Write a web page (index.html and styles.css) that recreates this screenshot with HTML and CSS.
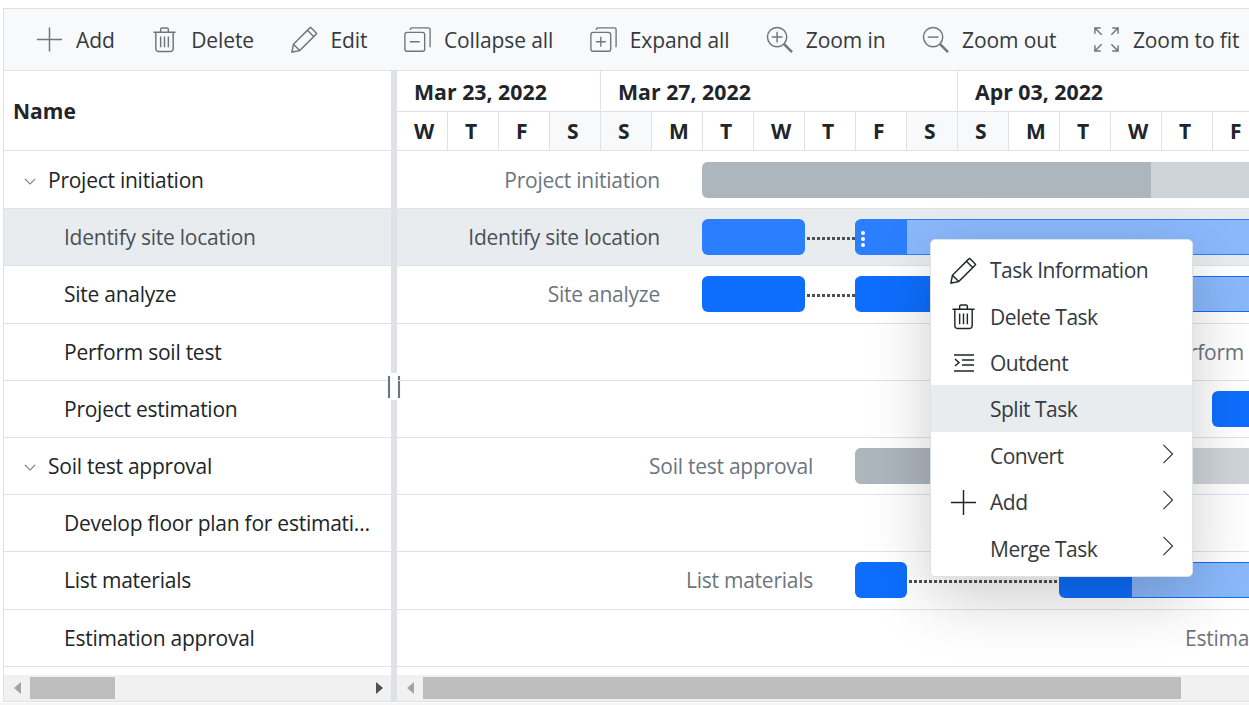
FILE: index.html
```html
<!DOCTYPE html>
<html lang="en">
<head>
<meta charset="utf-8">
<title>Gantt</title>
<link rel="stylesheet" href="styles.css">
</head>
<body>
<div class="gantt">
  <div class="toolbar">
    <div class="tool"><svg class="ti" viewBox="0 0 28 28"><path d="M1 14h26M14 1.500v25"/></svg><span>Add</span></div>
    <div class="tool"><svg class="ti" viewBox="0 0 28 28"><path d="M2.500 6.500h23M5 7v16.500a3 3 0 0 0 3 3h12a3 3 0 0 0 3-3V7M10 6V3.500a1.500 1.500 0 0 1 1.500-1.500h5a1.500 1.500 0 0 1 1.500 1.500V6M10 11v11M14 11v11M18 11v11"/></svg><span>Delete</span></div>
    <div class="tool"><svg class="ti" viewBox="0 0 28 28"><path d="M1 27l1.500-8L19 2.500l1.500-1 6 6-1 1.500L9 25.500zM2.500 19l6.500 6.500M17 4.500l6.500 6.500"/></svg><span>Edit</span></div>
    <div class="tool"><svg class="ti" viewBox="0 0 30 28"><rect x="1" y="6" width="22" height="21" rx="2.500"/><path d="M7 3.500V3a2 2 0 0 1 2-2h18a2 2 0 0 1 2 2v18a2 2 0 0 1-.5 1.500M6.500 16.500h11"/></svg><span>Collapse all</span></div>
    <div class="tool"><svg class="ti" viewBox="0 0 30 28"><rect x="1" y="6" width="22" height="21" rx="2.500"/><path d="M7 3.500V3a2 2 0 0 1 2-2h18a2 2 0 0 1 2 2v18a2 2 0 0 1-.5 1.500M6.500 16.500h11M12 11v11"/></svg><span>Expand all</span></div>
    <div class="tool"><svg class="ti" viewBox="0 0 28 28"><circle cx="11.500" cy="11.500" r="10"/><path d="M18.500 18.500L27 27" class="thick"/><path d="M6 11.500h11M11.500 6v11"/></svg><span>Zoom in</span></div>
    <div class="tool"><svg class="ti" viewBox="0 0 28 28"><circle cx="11.500" cy="11.500" r="10"/><path d="M18.500 18.500L27 27" class="thick"/><path d="M6 11.500h11"/></svg><span>Zoom out</span></div>
    <div class="tool"><svg class="ti" viewBox="0 0 28 28"><path d="M2 2l7 7M2 8V2h6M26 2l-7 7M20 2h6v6M2 26l7-7M2 20v6h6M26 26l-7-7M20 26h6v-6"/></svg><span>Zoom to fit</span></div>
  </div>
  <div class="main">
    <div class="pane-grid">
      <div class="name-head">Name</div>
      <div class="rows">
        <div class="row"><svg class="chev" viewBox="0 0 14 8"><path d="M1 1l6 6 6-6"/></svg><span>Project initiation</span></div>
        <div class="row child sel"><span>Identify site location</span></div>
        <div class="row child"><span>Site analyze</span></div>
        <div class="row child"><span>Perform soil test</span></div>
        <div class="row child"><span>Project estimation</span></div>
        <div class="row"><svg class="chev" viewBox="0 0 14 8"><path d="M1 1l6 6 6-6"/></svg><span>Soil test approval</span></div>
        <div class="row child"><span class="clip">Develop floor plan for estimation</span></div>
        <div class="row child"><span>List materials</span></div>
        <div class="row child"><span>Estimation approval</span></div>
        <div class="row child"></div>
      </div>
      <div class="hscroll">
        <i class="arr-l"></i>
        <div class="track"><div class="thumb thumb-a"></div></div>
        <i class="arr-r"></i>
      </div>
    </div>
    <div class="splitter"><div class="grip"><b></b><b></b></div></div>
    <div class="pane-chart">
      <div class="months">
        <div class="month m4">Mar 23, 2022</div>
        <div class="month m7">Mar 27, 2022</div>
        <div class="month m7">Apr 03, 2022</div>
      </div>
      <div class="days">
        <div class="day">W</div><div class="day">T</div><div class="day">F</div><div class="day off">S</div>
        <div class="day off">S</div><div class="day">M</div><div class="day">T</div><div class="day">W</div><div class="day">T</div><div class="day">F</div><div class="day off">S</div>
        <div class="day off">S</div><div class="day">M</div><div class="day">T</div><div class="day">W</div><div class="day">T</div><div class="day">F</div>
      </div>
      <div class="rows">
        <div class="row track-row">
          <span class="lbl" style="width:263px">Project initiation</span>
          <div class="bar sum" style="left:305px;width:600px"><div class="prog" style="width:449px"></div></div>
        </div>
        <div class="row track-row sel">
          <span class="lbl" style="width:263px">Identify site location</span>
          <div class="bar task hot" style="left:305px;width:103px"></div>
          <div class="link" style="left:410px;width:48px"></div>
          <div class="bar part hot" style="left:458px;width:600px"><div class="prog" style="width:52px"><span class="dots"></span></div></div>
        </div>
        <div class="row track-row">
          <span class="lbl" style="width:263px">Site analyze</span>
          <div class="bar task" style="left:305px;width:103px"></div>
          <div class="link" style="left:410px;width:48px"></div>
          <div class="bar part" style="left:458px;width:600px"><div class="prog" style="width:205px"></div></div>
        </div>
        <div class="row track-row"><span class="lbl-l" style="left:768px">Perform soil test</span></div>
        <div class="row track-row"><div class="bar task" style="left:815px;width:100px"></div></div>
        <div class="row track-row">
          <span class="lbl" style="width:416px">Soil test approval</span>
          <div class="bar sum" style="left:458px;width:600px"><div class="prog" style="width:200px"></div></div>
        </div>
        <div class="row track-row"></div>
        <div class="row track-row">
          <span class="lbl" style="width:416px">List materials</span>
          <div class="bar task" style="left:458px;width:52px"></div>
          <div class="link" style="left:512px;width:150px"></div>
          <div class="bar part" style="left:662px;width:600px"><div class="prog" style="width:73px"></div></div>
        </div>
        <div class="row track-row"><span class="lbl-l" style="left:788px">Estimation approval</span></div>
        <div class="row track-row"></div>
      </div>
      <div class="hscroll">
        <i class="arr-l"></i>
        <div class="track"><div class="thumb thumb-b"></div></div>
      </div>
    </div>
  </div>
  <div class="menu">
    <div class="mi"><svg class="mic" viewBox="0 0 28 28"><path d="M1 27l1.500-8L19 2.500l1.500-1 6 6-1 1.500L9 25.500zM2.500 19l6.500 6.500M17 4.500l6.500 6.500"/></svg><span>Task Information</span></div>
    <div class="mi"><svg class="mic" viewBox="0 0 28 28"><path d="M2.500 6.500h23M5 7v16.500a3 3 0 0 0 3 3h12a3 3 0 0 0 3-3V7M10 6V3.500a1.500 1.500 0 0 1 1.500-1.500h5a1.500 1.500 0 0 1 1.500 1.500V6M10 11v11M14 11v11M18 11v11"/></svg><span>Delete Task</span></div>
    <div class="mi"><svg class="mic mic-o" viewBox="0 0 22 18"><path d="M1 1h20M9 6h12M9 11h12M1 17h20M2 5l4 3.500L2 12"/></svg><span>Outdent</span></div>
    <div class="mi on"><span class="nic"></span><span>Split Task</span></div>
    <div class="mi"><span class="nic"></span><span>Convert</span><svg class="sub" viewBox="0 0 12 22"><path d="M1 1l10 10L1 21"/></svg></div>
    <div class="mi"><svg class="mic" viewBox="0 0 28 28"><path d="M1 14h26M14 1v26"/></svg><span>Add</span><svg class="sub" viewBox="0 0 12 22"><path d="M1 1l10 10L1 21"/></svg></div>
    <div class="mi"><span class="nic"></span><span>Merge Task</span><svg class="sub" viewBox="0 0 12 22"><path d="M1 1l10 10L1 21"/></svg></div>
  </div>
</div>
<div class="foot"></div>
</body>
</html>
```

FILE: styles.css
```css
html, body { margin: 0; padding: 0; }
body {
  height: 705px;
  overflow: hidden;
  background: #fff;
  color: #212529;
  font-family: "Open Sans", "Noto Sans", sans-serif;
  font-size: 21px;
  letter-spacing: -.25px;
}
.gantt {
  position: relative;
  box-sizing: border-box;
  margin: 8px 0 0 3px;
  width: 1270px;
  height: 694px;
  border: 1px solid #dee2e6;
  overflow: hidden;
}
.foot { margin-top: 1px; height: 2px; background: #f5f5f5; }

.toolbar {
  box-sizing: border-box;
  display: flex;
  align-items: center;
  height: 62px;
  padding: 0 0 0 32px;
  gap: 36.500px;
  background: #f8f9fa;
  border-bottom: 1px solid #dee2e6;
  white-space: nowrap;
  letter-spacing: -.1px;
}
.tool { display: flex; align-items: center; gap: 13px; color: #343a40; }
.ti { width: 27px; height: 27px; fill: none; stroke: #6c757d; stroke-width: 1.500; flex: none; }
.ti .thick { stroke-width: 2.500; }

.main { display: flex; height: 630px; }
.pane-grid { width: 387px; flex: none; display: flex; flex-direction: column; }
.name-head {
  box-sizing: border-box;
  height: 80px;
  padding-left: 9px;
  display: flex;
  align-items: center;
  font-weight: 700;
  letter-spacing: 0;
  border-bottom: 1px solid #dee2e6;
}
.rows { box-sizing: border-box; height: 524px; padding-top: 1px; overflow: hidden; flex: none; }
.row {
  position: relative;
  box-sizing: border-box;
  height: 57.2px;
  display: flex;
  align-items: center;
  padding-left: 44px;
  border-bottom: 1px solid #dee2e6;
  white-space: nowrap;
}
.row.child { padding-left: 60px; }
.row.sel { background: #e9ecef; color: #495057; }
.chev {
  position: absolute;
  left: 20px;
  top: 26px;
  width: 12px;
  height: 7px;
  fill: none;
  stroke: #6c757d;
  stroke-width: 1.300;
}
.clip {
  display: block;
  width: 307px;
  overflow: hidden;
  text-overflow: ellipsis;
}

.splitter {
  position: relative;
  width: 6px;
  flex: none;
  background: #dee2e6;
}
.grip {
  position: absolute;
  left: -4px;
  top: 302px;
  width: 14px;
  height: 27px;
  background: #fff;
  display: flex;
  justify-content: space-between;
  align-items: center;
  box-sizing: border-box;
  padding: 0 1px;
}
.grip b { width: 2px; height: 22px; background: #6c757d; box-shadow: 0 0 1px #adb5bd; }

.pane-chart { flex: 1; min-width: 0; display: flex; flex-direction: column; }
.months { display: flex; height: 41px; box-sizing: border-box; border-bottom: 1px solid #dee2e6; }
.month {
  box-sizing: border-box;
  flex: none;
  padding: 6px 0 0 17px;
  font-size: 21.3px;
  font-weight: 700;
  letter-spacing: 0;
  border-right: 1px solid #dee2e6;
}
.m4 { width: 204px; }
.m7 { width: 357px; }
.days { display: flex; height: 39px; box-sizing: border-box; border-bottom: 1px solid #dee2e6; }
.day {
  box-sizing: border-box;
  width: 51px;
  flex: none;
  padding: 5px 0 0 17px;
  font-weight: 700;
  letter-spacing: 0;
  border-right: 1px solid #dee2e6;
}
.day.off { background: #f8f9fa; }
.track-row { padding-left: 0; color: #6c757d; }
.track-row.sel { color: #495057; }

.lbl { position: absolute; left: 0; top: 14px; text-align: right; }
.lbl-l { position: absolute; top: 14px; }
.bar {
  position: absolute;
  top: 10px;
  height: 36px;
  box-sizing: border-box;
  border-radius: 6px;
  overflow: hidden;
}
.task { background: #0d6efd; }
.task.hot { background: #2b7fff; }
.part { background: #8ab8fb; border-top: 1px solid #0d6efd; border-bottom: 1px solid #0d6efd; }
.part .prog { background: #0d6efd; height: 100%; position: relative; }
.part.hot { border-color: #2b7fff; }
.part.hot .prog { background: #2b7fff; }
.sum { background: #ced4da; }
.sum .prog { background: #adb5bd; height: 100%; }
.link {
  position: absolute;
  top: 28px;
  height: 3px;
  background: repeating-linear-gradient(90deg, #495057 0 3px, transparent 3px 5px);
}
.dots {
  position: absolute;
  left: 6px;
  top: 11px;
  width: 4px;
  height: 4px;
  border-radius: 50%;
  background: #fff;
  box-shadow: 0 6px 0 #fff, 0 12px 0 #fff;
}

.hscroll {
  box-sizing: border-box;
  flex: none;
  height: 26px;
  display: flex;
  align-items: center;
  background: #f1f1f1;
  position: relative;
}
.track { flex: 1; height: 22px; }
.thumb { height: 22px; background: #bdbdbd; }
.thumb-a { width: 85px; }
.thumb-b { width: 758px; }
.pane-grid .track { margin-left: 9px; margin-right: 8px; }
.pane-chart .track { margin-left: 9px; }
.arr-l, .arr-r { flex: none; width: 0; height: 0; border-top: 6px solid transparent; border-bottom: 6px solid transparent; }
.arr-l { margin-left: 10px; border-right: 7px solid #a3a3a3; }
.arr-r { margin-right: 8px; border-left: 7px solid #505050; }

.menu {
  position: absolute;
  left: 926px;
  top: 230px;
  box-sizing: border-box;
  width: 263px;
  height: 338px;
  padding: 6px 0;
  background: #fff;
  border: 1px solid #dee2e6;
  border-radius: 5px;
  box-shadow: 0 21px 64px rgba(0, 0, 0, .2);
  color: #343a40;
  letter-spacing: -.5px;
}
.mi {
  position: relative;
  box-sizing: border-box;
  height: 46.400px;
  display: flex;
  align-items: center;
  padding: 2px 0 0 18px;
  white-space: nowrap;
}
.mi.on { background: #e9ecef; }
.mic { width: 27px; height: 27px; flex: none; margin: 0 13px 0 1px; fill: none; stroke: #212529; stroke-width: 1.500; }
.mic-o { height: 18px; width: 22px; margin: 0 15px 0 4px; }
.nic { width: 41px; flex: none; }
.sub {
  position: absolute;
  right: 18px;
  top: 12px;
  width: 12px;
  height: 20px;
  fill: none;
  stroke: #343a40;
  stroke-width: 1.300;
}
```
